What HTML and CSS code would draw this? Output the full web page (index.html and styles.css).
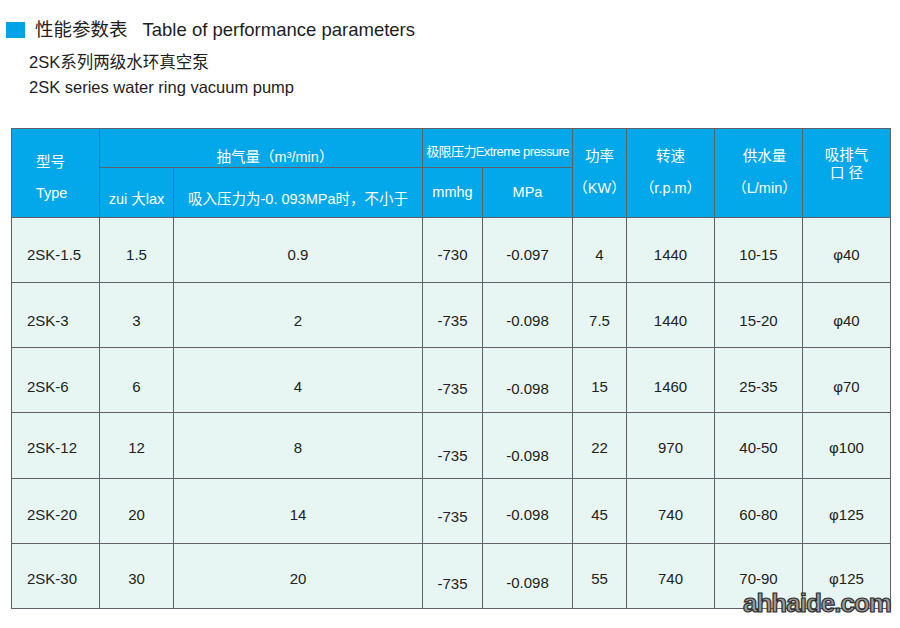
FILE: index.html
```html
<!DOCTYPE html>
<html lang="zh">
<head>
<meta charset="utf-8">
<title>性能参数表</title>
<link rel="stylesheet" href="styles.css">
</head>
<body>
<div class="page">
  <div class="title">
    <span class="mark"></span>
    <span class="title-cn">性能参数表</span>
    <span class="title-en">Table of performance parameters</span>
  </div>
  <div class="sub sub1">2SK系列两级水环真空泵</div>
  <div class="sub sub2">2SK series water ring vacuum pump</div>

  <table class="spec">
    <colgroup>
      <col class="c1"><col class="c2"><col class="c3"><col class="c4"><col class="c5">
      <col class="c6"><col class="c7"><col class="c8"><col class="c9">
    </colgroup>
    <thead>
      <tr class="h1">
        <th rowspan="2" class="type"><div>型号</div><div class="l2-type">Type</div></th>
        <th colspan="2" class="flow">抽气量（m³/min）</th>
        <th colspan="2" class="press">极限压力Extreme pressure</th>
        <th rowspan="2" class="two"><div>功率</div><div class="l2">（KW）</div></th>
        <th rowspan="2" class="two"><div>转速</div><div class="l2">（r.p.m）</div></th>
        <th rowspan="2" class="two water"><div>供水量</div><div class="l2">（L/min）</div></th>
        <th rowspan="2" class="port"><div>吸排气</div><div>口 径</div></th>
      </tr>
      <tr class="h2">
        <th class="low">zui 大lax</th>
        <th class="low">吸入压力为-0. 093MPa时，不小于</th>
        <th class="mid">mmhg</th>
        <th class="mid">MPa</th>
      </tr>
    </thead>
    <tbody>
      <tr class="r1">
        <td class="model">2SK-1.5</td><td>1.5</td><td>0.9</td><td>-730</td><td>-0.097</td><td>4</td><td>1440</td><td>10-15</td><td>φ40</td>
      </tr>
      <tr class="r2">
        <td class="model">2SK-3</td><td>3</td><td>2</td><td>-735</td><td>-0.098</td><td>7.5</td><td>1440</td><td>15-20</td><td>φ40</td>
      </tr>
      <tr class="r3">
        <td class="model">2SK-6</td><td>6</td><td>4</td><td class="dn">-735</td><td class="dn">-0.098</td><td>15</td><td>1460</td><td>25-35</td><td>φ70</td>
      </tr>
      <tr class="r4">
        <td class="model">2SK-12</td><td>12</td><td>8</td><td class="dn">-735</td><td class="dn">-0.098</td><td>22</td><td>970</td><td>40-50</td><td>φ100</td>
      </tr>
      <tr class="r5">
        <td class="model">2SK-20</td><td>20</td><td>14</td><td class="dn">-735</td><td>-0.098</td><td>45</td><td>740</td><td>60-80</td><td>φ125</td>
      </tr>
      <tr class="r6">
        <td class="model">2SK-30</td><td>30</td><td>20</td><td class="dn">-735</td><td class="dn2">-0.098</td><td>55</td><td>740</td><td>70-90</td><td>φ125</td>
      </tr>
    </tbody>
  </table>

  <div class="watermark">ahhaide.com</div>
</div>
</body>
</html>
```

FILE: styles.css
```css
* { box-sizing: border-box; }

html, body {
  margin: 0;
  padding: 0;
  background: #ffffff;
}

body {
  font-family: "Liberation Sans", "Noto Sans CJK SC", sans-serif;
  color: #222222;
}

.page {
  position: relative;
  width: 900px;
  height: 628px;
  overflow: hidden;
}

.title {
  display: flex;
  align-items: center;
  padding-top: 18px;
  height: 42px;
  color: #1e1e1e;
}

.mark {
  width: 19px;
  height: 16px;
  margin-left: 6px;
  margin-right: 10px;
  background: #00a3e6;
}

.title-cn,
.title-en {
  font-size: 18.5px;
  line-height: 24px;
}

.title-en { margin-left: 15px; }

.sub {
  font-size: 16.5px;
  line-height: 25px;
  padding-left: 29px;
  color: #1e1e1e;
}

.sub1 { margin-top: 8px; }

.spec {
  margin-top: 28px;
  margin-left: 11px;
  width: 880px;
  table-layout: fixed;
  border-collapse: collapse;
}

.c1 { width: 88px; }
.c2 { width: 74px; }
.c3 { width: 249px; }
.c4 { width: 60px; }
.c5 { width: 90px; }
.c6 { width: 54px; }
.c7 { width: 88px; }
.c8 { width: 88px; }
.c9 { width: 88px; }

.spec th,
.spec td {
  border: 1px solid #5e6266;
  padding: 0;
  vertical-align: top;
  text-align: center;
  white-space: nowrap;
}

.spec th {
  background: #02a8ea;
  color: #ffffff;
  font-weight: normal;
  font-size: 14.5px;
  line-height: 20px;
}

.h1 { height: 39px; }
.h2 { height: 50px; }

.spec th.type {
  text-align: left;
  padding-left: 24px;
  padding-top: 23px;
}

.l2 { margin-top: 12px; }
.l2-type { margin-top: 11px; }

.spec th.flow {
  padding-top: 18px;
  padding-left: 28px;
}

.spec th.press {
  padding-top: 13px;
  font-size: 13px;
  letter-spacing: -0.6px;
}

.spec th.two { padding-top: 17px; }
.spec th.water { padding-left: 12px; }

.spec th.port {
  padding-top: 17px;
  line-height: 18px;
}

.spec th.low { padding-top: 21px; }
.spec th.mid { padding-top: 14px; }

.spec td {
  background: #e7f6f2;
  font-size: 15px;
  line-height: 20px;
  color: #222;
}

.spec td.model {
  text-align: left;
  padding-left: 15px;
}

.spec tbody tr { height: 65px; }
.spec tbody tr.r4 { height: 66px; }

.r1 td { padding-top: 27px; }
.r2 td { padding-top: 28px; }
.r3 td { padding-top: 29px; }
.r3 td.dn { padding-top: 31px; }
.r4 td { padding-top: 25px; }
.r4 td.dn { padding-top: 33px; }
.r5 td { padding-top: 26px; }
.r5 td.dn { padding-top: 28px; }
.r6 td { padding-top: 25px; }
.r6 td.dn { padding-top: 30px; }
.r6 td.dn2 { padding-top: 29px; }

.watermark {
  position: absolute;
  left: 743px;
  top: 588px;
  font-family: "Liberation Sans", sans-serif;
  font-weight: bold;
  font-size: 26px;
  line-height: 30px;
  letter-spacing: -1px;
  color: #9a9a9a;
  -webkit-text-stroke: 1.2px #2e2e2e;
}
```
